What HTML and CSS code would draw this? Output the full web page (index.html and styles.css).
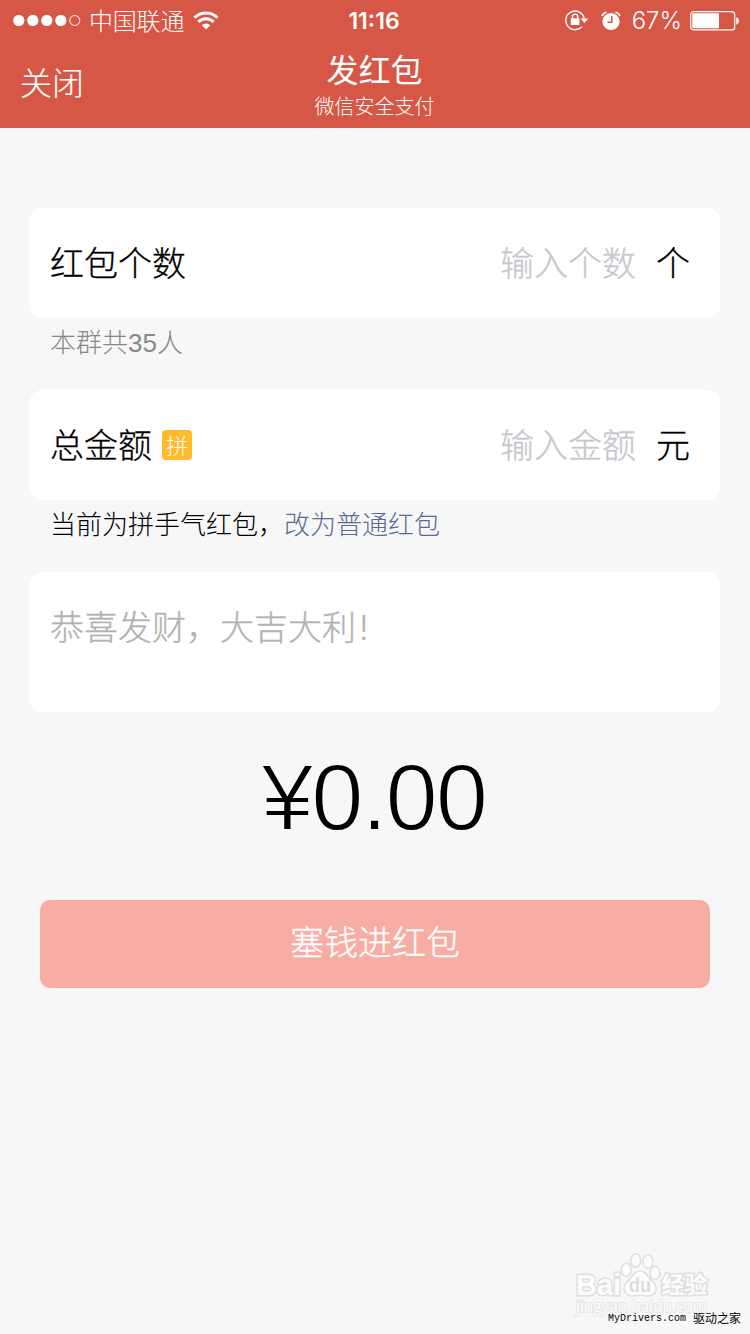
FILE: index.html
```html
<!DOCTYPE html>
<html lang="zh-CN">
<head>
<meta charset="utf-8">
<title>发红包</title>
<link rel="stylesheet" href="styles.css">
</head>
<body>
<div class="screen">
  <header class="header">
    <div class="status">
      <div class="status-left">
        <svg class="signal" width="68" height="12" viewBox="0 0 68 12" fill="#fff">
          <circle cx="5.8" cy="5.5" r="5.6"/><circle cx="19.8" cy="5.5" r="5.6"/><circle cx="33.8" cy="5.5" r="5.6"/><circle cx="47.8" cy="5.5" r="5.6"/>
          <circle cx="61.8" cy="5.5" r="5" fill="none" stroke="#fff" stroke-width="1"/>
        </svg>
        <span class="carrier">中国联通</span>
        <svg class="wifi" width="26" height="20" viewBox="0 0 26 20" fill="none" stroke="#fff" stroke-width="3">
          <path d="M1.5 6.7A16.3 16.3 0 0 1 24.5 6.7"/>
          <path d="M5.4 10.9A10.8 10.8 0 0 1 20.6 10.9"/>
          <path d="M13 18.5L8.7 14.2A6.1 6.1 0 0 1 17.3 14.2Z" fill="#fff" stroke="none"/>
        </svg>
      </div>
      <span class="clock">11:16</span>
      <div class="status-right">
        <svg class="lock" width="24" height="22" viewBox="0 0 24 22" fill="none" stroke="#fff">
          <path d="M17 16.6A9.3 9.3 0 1 1 19.2 8.5" stroke-width="1.4"/>
          <path d="M15.4 8.5H23.4L19.4 12.9Z" fill="#fff" stroke="none"/>
          <rect x="5.8" y="8.3" width="8.6" height="6.6" rx=".5" fill="#fff" stroke="none"/>
          <path d="M7.5 9V6.7a2.6 2.6 0 0 1 5.2 0V9" stroke-width="1.4"/>
        </svg>
        <svg class="alarm" width="20" height="20" viewBox="0 0 20 20">
          <circle cx="10" cy="10.5" r="8.6" fill="#fff"/>
          <path d="M1 5.1A6 6 0 0 1 5.6 1.2M19 5.1A6 6 0 0 0 14.4 1.2" fill="none" stroke="#fff" stroke-width="1.6"/>
          <path d="M10.8 5V11.2H6.4" fill="none" stroke="#d65745" stroke-width="1.5"/>
        </svg>
        <span class="percent">67%</span>
        <svg class="battery" width="50" height="20" viewBox="0 0 50 20">
          <rect x=".7" y=".7" width="44" height="18.2" rx="3" fill="none" stroke="#fff" stroke-width="1.2"/>
          <rect x="2.3" y="2.3" width="26.7" height="15" rx="1" fill="#fff"/>
          <path d="M46.2 6.3C49.8 7 49.8 13 46.2 13.7Z" fill="#fff"/>
        </svg>
      </div>
    </div>
    <nav class="nav">
      <span class="close">关闭</span>
      <div class="heading">
        <h1 class="title">发红包</h1>
        <p class="subtitle">微信安全支付</p>
      </div>
      <span></span>
    </nav>
  </header>

  <main class="form">
    <section class="card row">
      <span class="label">红包个数</span>
      <span class="placeholder">输入个数</span>
      <span class="unit">个</span>
    </section>
    <p class="note muted">本群共<span class="latin">35</span>人</p>

    <section class="card row">
      <span class="label">总金额</span>
      <span class="tag">拼</span>
      <span class="placeholder">输入金额</span>
      <span class="unit">元</span>
    </section>
    <p class="note">当前为拼手气红包，<a class="link">改为普通红包</a></p>

    <section class="card message">恭喜发财，大吉大利<span class="bang">!</span></section>

    <div class="amount">¥0.00</div>
    <div class="submit">塞钱进红包</div>
  </main>

  <svg class="watermark" width="144" height="70" viewBox="0 0 144 70">
    <g class="mark">
      <ellipse cx="54.3" cy="19.7" rx="5" ry="6.5"/>
      <ellipse cx="63.7" cy="10.5" rx="5" ry="6.8"/>
      <ellipse cx="76" cy="11.5" rx="5" ry="6.8"/>
      <ellipse cx="83" cy="23" rx="5" ry="6.5"/>
      <path d="M68 21C61 21 60 28 55 32C49 38 53 46.5 61 46C66 45 70 45 75 46C84 46.5 87 38 81 32C76 28 75 21 68 21Z"/>
      <text x="4" y="45" class="wm-bai" textLength="45" lengthAdjust="spacingAndGlyphs">Bai</text>
      <text x="89.5" y="43" class="wm-cn">经验</text>
      <text x="57" y="42" class="wm-du" textLength="22" lengthAdjust="spacingAndGlyphs">du</text>
    </g>
    <text x="4" y="61.5" class="wm-url" textLength="131" lengthAdjust="spacingAndGlyphs">jingyan.baidu.com</text>
  </svg>
  <div class="source"><span class="source-site">MyDrivers.com</span><span class="source-name">驱动之家</span></div>
</div>
</body>
</html>
```
FILE: styles.css
```css
* { box-sizing: border-box; margin: 0; padding: 0; }

body {
  background: #f7f7f7;
  font-family: "Noto Sans CJK SC", sans-serif;
  font-weight: 300;
  color: #000;
}

.screen {
  position: relative;
  width: 750px;
  height: 1334px;
  overflow: hidden;
  background: #f7f7f7;
}

svg { display: block; flex: none; }

.header { height: 128px; background: #d65745; color: #fff; }

.status {
  display: grid;
  grid-template-columns: 1fr auto 1fr;
  align-items: center;
  height: 40px;
  padding: 0 10px 0 13px;
}
.status-left, .status-right { display: flex; align-items: center; height: 40px; }
.status-right { justify-content: flex-end; }
.carrier { margin: 0 9px 0 8px; font-size: 24px; line-height: 38px; height: 40px; letter-spacing: -0.2px; }
.clock {
  font: 600 23px/40px "Inter", sans-serif;
  padding: 1px 5px 0 0;
}
.alarm { margin: 0 11px 0 12px; }
.percent { font: 300 24px/40px "Inter", sans-serif; margin-right: 8px; padding-top: 1px; }

.nav { display: grid; grid-template-columns: 1fr auto 1fr; height: 88px; padding: 0 21px 0 20px; }
.close { font-size: 32px; line-height: 82px; -webkit-text-stroke: 0.2px #fff; }
.heading { text-align: center; }
.title {
  font-size: 32px;
  font-weight: 400;
  line-height: 40px;
  padding-top: 8px;
}
.subtitle { font-size: 20px; line-height: 28px; padding-top: 4px; }

.form { padding: 80px 30px 0; }
.card { background: #fff; border-radius: 12px; font-size: 34px; }
.row { display: flex; align-items: center; height: 110px; padding: 0 30px 2px 20px; line-height: 50px; }
.label, .unit { -webkit-text-stroke: 0.3px #000; }
.placeholder { margin-left: auto; color: #c7c7cd; -webkit-text-stroke: 0.3px #c7c7cd; }
.unit { margin-left: 20px; }
.tag {
  width: 30px;
  height: 30px;
  margin: 2px 0 0 10px;
  border-radius: 4px;
  background: #ffbb2b;
  color: #fff;
  font-size: 22px;
  line-height: 28px;
  text-align: center;
}
.note { height: 72px; padding-left: 20px; font-size: 26px; line-height: 46px; }
.muted { color: #888; }
.latin { font-family: "Liberation Sans", sans-serif; }
.link { color: #576b95; }
.message {
  height: 140px;
  padding: 29px 20px;
  line-height: 50px;
  color: #b2b2b2;
  -webkit-text-stroke: 0.3px #b2b2b2;
}
.bang { font-family: "Inter", sans-serif; margin-left: 3px; -webkit-text-stroke: 0; }

/* The page-coloured outline thins the digits to a light weight */
.amount {
  height: 188px;
  padding: 31px 3px 0 0;
  font: 400 94px/110px "Liberation Sans", sans-serif;
  letter-spacing: -2.1px;
  -webkit-text-stroke: 1.8px #f7f7f7;
  text-align: center;
}
.submit {
  height: 88px;
  margin: 0 10px;
  border-radius: 10px;
  background: #f8ada4;
  color: #fff;
  font-size: 34px;
  line-height: 82px;
  text-align: center;
  -webkit-text-stroke: 0.3px #fff;
}

/* Site marks laid over the bottom-right corner */
.watermark { position: absolute; left: 572px; top: 1250px; }
.mark { fill: #fcfcfc; stroke: #dfdfdf; stroke-width: 1.5; }
.mark text { paint-order: stroke; stroke-width: 3; font-weight: 700; }
.wm-bai { font: 700 30px "Liberation Sans", sans-serif; }
.mark .wm-du { font: 700 20px "Liberation Sans", sans-serif; fill: #dcdcdc; stroke: none; }
.wm-cn { font-size: 23px; }
.wm-url { font: 400 16px "Open Sans", sans-serif; fill: #fdfdfd; stroke: #e6e6e6; stroke-width: 2; paint-order: stroke; }

.source {
  position: absolute;
  right: 9px;
  top: 1308px;
  display: flex;
  gap: 7px;
  line-height: 20px;
  font-weight: 400;
}
.source-site { font: 400 10px/22px "Liberation Mono", monospace; }
.source-name { font-size: 12px; line-height: 19px; }
```
